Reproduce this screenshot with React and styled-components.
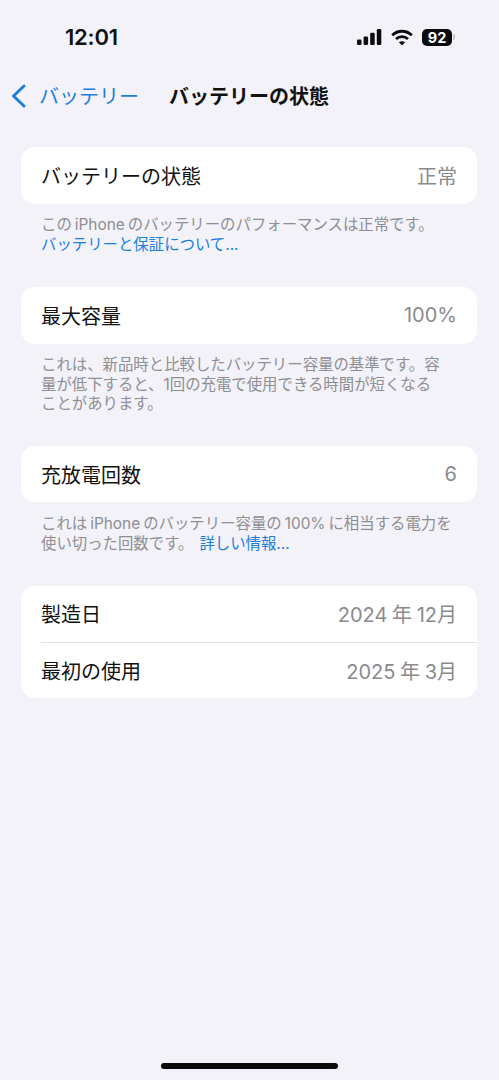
import React from 'react'
import styled, { createGlobalStyle } from 'styled-components'

const GlobalStyle = createGlobalStyle`
  html, body {
    margin: 0;
    background: #f2f2f8;
  }
  * {
    box-sizing: border-box;
  }
`

const Page = styled.div`
  width: 499px;
  height: 1080px;
  overflow: hidden;
  display: flex;
  flex-direction: column;
  background: #f2f2f8;
  color: #111;
  font-family: Inter, "Noto Sans CJK JP", sans-serif;
`

const StatusBar = styled.div`
  height: 74px;
  flex: none;
  display: flex;
  align-items: center;
  justify-content: space-between;
  padding: 0 44px 0 65px;
`

const Time = styled.div`
  font-size: 22px;
  font-weight: 600;
  letter-spacing: -0.2px;
`

const StatusIcons = styled.div`
  display: flex;
  align-items: center;
  gap: 9px;
`

const BatteryWrap = styled.div`
  display: flex;
  align-items: center;
  gap: 1px;
`

const BatteryBody = styled.div`
  width: 30px;
  height: 17px;
  border-radius: 5px;
  background: #0c0c0e;
  color: #fff;
  font-size: 14.5px;
  font-weight: 700;
  line-height: 17px;
  text-align: center;
`

const BatteryCap = styled.div`
  width: 2px;
  height: 6px;
  border-radius: 0 2px 2px 0;
  background: #c4c4c8;
`

const NavBar = styled.div`
  height: 43px;
  flex: none;
  display: flex;
  align-items: center;
  padding-left: 11px;
`

const BackLink = styled.div`
  display: flex;
  align-items: center;
  gap: 13px;
  width: 158px;
  flex: none;
  font-size: 20px;
  color: #1c7fdc;
`

const Title = styled.div`
  font-size: 20px;
  font-weight: 700;
`

const Content = styled.div`
  padding: 30px 22px 0 21px;
  display: flex;
  flex-direction: column;
`

const Card = styled.div`
  background: #fff;
  border-radius: 14px;
`

const Row = styled.div`
  height: ${p => p.$height || 56.5}px;
  display: flex;
  align-items: center;
  justify-content: space-between;
  padding: 0 20px;
  font-size: 20px;
`

const Value = styled.span`
  color: #8a8a8e;
  word-spacing: -1px;
`

const Divider = styled.div`
  height: 1px;
  margin-left: 20px;
  background: #e3e3e6;
`

const Note = styled.p`
  margin: 11.5px 0 ${p => p.$gap}px 0;
  padding: 0 20px;
  font-size: 15.4px;
  line-height: 19.6px;
  color: #8e8e93;
`

const Latin = styled.span`
  margin: 0 3px;
`

const NoteLink = styled.span`
  color: #1c7fdc;
  margin-left: ${p => p.$indent || 0}px;
`

const HomeIndicator = styled.div`
  width: 177px;
  height: 6px;
  flex: none;
  margin: auto auto 11px;
  border-radius: 3px;
  background: #0a0a0a;
`

const SignalIcon = () => (
  <svg width="25" height="16" viewBox="0 0 25 16" fill="#0c0c0e">
    <rect x="0" y="10.5" width="4.5" height="5.5" rx="1.2" />
    <rect x="6.6" y="7.5" width="4.5" height="8.5" rx="1.2" />
    <rect x="13.2" y="3.8" width="4.5" height="12.2" rx="1.2" />
    <rect x="19.8" y="0" width="4.5" height="16" rx="1.2" />
  </svg>
)

const WifiIcon = () => (
  <svg width="22" height="17" viewBox="0 0 22 17" fill="none" stroke="#0c0c0e" strokeWidth="2.8">
    <path d="M1.2 6.2C6.8 0.9 15.2 0.9 20.8 6.2" />
    <path d="M5 10C8.4 6.9 13.6 6.9 17 10" />
    <path d="M11 16.6L7.9 13.3C9.7 11.8 12.3 11.8 14.1 13.3Z" fill="#0c0c0e" stroke="none" />
  </svg>
)

const BackChevron = () => (
  <svg width="15" height="24" viewBox="0 0 15 24" fill="none" stroke="#1c7fdc" strokeWidth="3" strokeLinecap="round" strokeLinejoin="round">
    <path d="M13 2L2.5 12L13 22" />
  </svg>
)

export default function App() {
  return (
    <Page>
      <GlobalStyle />
      <StatusBar>
        <Time>12:01</Time>
        <StatusIcons>
          <SignalIcon />
          <WifiIcon />
          <BatteryWrap>
            <BatteryBody>92</BatteryBody>
            <BatteryCap />
          </BatteryWrap>
        </StatusIcons>
      </StatusBar>
      <NavBar>
        <BackLink>
          <BackChevron />
          バッテリー
        </BackLink>
        <Title>バッテリーの状態</Title>
      </NavBar>
      <Content>
        <Card>
          <Row>
            バッテリーの状態
            <Value>正常</Value>
          </Row>
        </Card>
        <Note $gap={33}>
          この<Latin>iPhone</Latin>のバッテリーのパフォーマンスは正常です。
          <br />
          <NoteLink>バッテリーと保証について...</NoteLink>
        </Note>
        <Card>
          <Row>
            最大容量
            <Value>100%</Value>
          </Row>
        </Card>
        <Note $gap={32}>
          これは、新品時と比較したバッテリー容量の基準です。容
          <br />
          量が低下すると、1回の充電で使用できる時間が短くなる
          <br />
          ことがあります。
        </Note>
        <Card>
          <Row>
            充放電回数
            <Value>6</Value>
          </Row>
        </Card>
        <Note $gap={33}>
          これは<Latin>iPhone</Latin>のバッテリー容量の<Latin>100%</Latin>に相当する電力を
          <br />
          使い切った回数です。
          <NoteLink $indent={6}>詳しい情報...</NoteLink>
        </Note>
        <Card>
          <Row $height={55.5}>
            製造日
            <Value>2024 年 12月</Value>
          </Row>
          <Divider />
          <Row $height={55.5}>
            最初の使用
            <Value>2025 年 3月</Value>
          </Row>
        </Card>
      </Content>
      <HomeIndicator />
    </Page>
  )
}
